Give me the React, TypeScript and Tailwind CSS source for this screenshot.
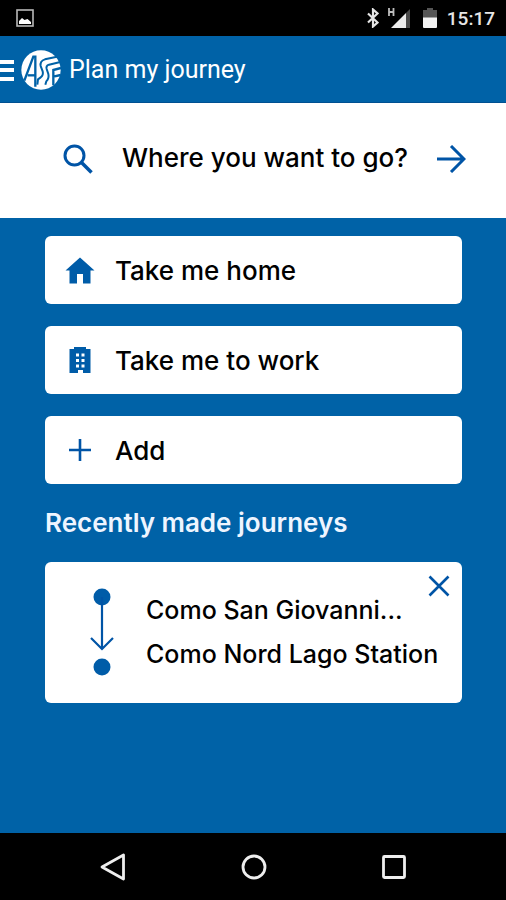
import { useState } from 'react';
import type { ReactNode } from 'react';

function StatusBar() {
    return (
        <div className="flex h-9 items-center justify-between bg-black pl-4 pr-[11px]">
            <svg className="h-[18px] w-[18px]" viewBox="0 0 18 18" aria-hidden="true">
                <rect x="1" y="1" width="16" height="16" fill="none" stroke="#b8b8b8" strokeWidth="1.6" />
                <path d="M3 15v-3l3-3 2.500 2 3-1 3.500 3v2z" fill="#fff" />
            </svg>
            <div className="flex items-center">
                <svg className="h-5 w-3" viewBox="0 0 12 20" fill="none" stroke="#e6e6e6" strokeWidth="2.200" aria-hidden="true">
                    <path d="M1 5.500l9.500 9L6 18.500v-17l4.500 4L1 14.500" />
                </svg>
                <svg className="ml-2 h-5 w-6" viewBox="0 0 24 20" aria-hidden="true">
                    <path d="M19 5L23 1v19h-4z" fill="#4a4a4a" />
                    <path d="M4 20L19 5v15z" fill="#ececec" />
                    <path d="M2 0v8M6.500 0v8M2 4h5" fill="none" stroke="#bdbdbd" strokeWidth="1.800" />
                </svg>
                <svg className="ml-3 h-5 w-[14px]" viewBox="0 0 14 20" aria-hidden="true">
                    <path d="M4 0h6v2h4v8H0V2h4z" fill="#555" />
                    <path d="M0 9.500h14V19a1 1 0 0 1-1 1H1a1 1 0 0 1-1-1z" fill="#f2f2f2" />
                </svg>
                <span className="ml-[10px] pt-0.5 font-['Roboto',sans-serif] text-[19px] font-medium leading-6 text-[#e6e6e6]">15:17</span>
            </div>
        </div>
    );
}

function Logo() {
    return (
        <svg className="h-10 w-10" viewBox="0 0 120 120" aria-hidden="true">
            <circle cx="60" cy="60" r="59" fill="#fff" />
            <g fill="none" stroke="#0062a7">
                <path d="M10 92L37 20h6v90" strokeWidth="7" />
                <path d="M20 76h22" strokeWidth="7" />
                <path d="M108 20L72 28Q56 33 59 48l6 16q3 12-6 18l-8 6-2 16" strokeWidth="6" />
                <path d="M118 36L84 44q-10 3-7 13l5 15q3 13-6 22l-3 10" strokeWidth="6" />
                <path d="M120 54L97 60v46M119 75L97 80" strokeWidth="7" />
            </g>
        </svg>
    );
}

function Header() {
    return (
        <header className="flex h-[67px] items-center border-b border-[#005091] pt-0.5 text-white">
            <button type="button" aria-label="Open menu" className="h-10 w-[14px] shrink-0">
                <svg className="h-10 w-[14px]" viewBox="0 0 14 40" fill="currentColor" aria-hidden="true">
                    <path d="M0 10h14v4H0zM0 18h14v4H0zM0 27h14v4H0z" />
                </svg>
            </button>
            <span className="ml-[7px] shrink-0">
                <Logo />
            </span>
            <h1 className="ml-2 font-['Roboto',sans-serif] text-[25px] leading-8">Plan my journey</h1>
        </header>
    );
}

function SearchForm() {
    const [query, setQuery] = useState('');

    return (
        <form
            className="flex h-[115px] items-center bg-white pb-1 pl-[63px] pr-10"
            onSubmit={(e) => e.preventDefault()}
        >
            <svg className="h-[30px] w-[30px] shrink-0" viewBox="0 0 30 30" fill="none" stroke="#0054a6" strokeWidth="3" aria-hidden="true">
                <circle cx="11.500" cy="11.500" r="9.500" />
                <path d="M18.500 18.500L28.500 28.500" strokeWidth="3.600" />
            </svg>
            <input
                type="text"
                aria-label="Destination"
                placeholder="Where you want to go?"
                value={query}
                onChange={(e) => setQuery(e.target.value)}
                className="ml-[29px] h-12 min-w-0 flex-1 pb-0.5 text-[26px] font-medium text-black outline-none placeholder:text-black placeholder:opacity-100"
            />
            <button type="submit" aria-label="Search" className="shrink-0">
                <svg className="h-7 w-[29px]" viewBox="0 0 29 28" fill="none" stroke="#0054a6" strokeWidth="3" aria-hidden="true">
                    <path d="M0 14h27M14 1l13 13-13 13" />
                </svg>
            </button>
        </form>
    );
}

const shortcuts: { label: string; icon: ReactNode }[] = [
    {
        label: 'Take me home',
        icon: (
            <svg className="h-[30px] w-[30px]" viewBox="0 0 30 30" fill="#005ca8" aria-hidden="true">
                <path d="M15 2.500L29.500 15.500h-4v13H18V19h-6v9.500H4.500v-13h-4z" />
            </svg>
        ),
    },
    {
        label: 'Take me to work',
        icon: (
            <svg className="h-[30px] w-[30px]" viewBox="0 0 30 30" fill="#005ca8" fillRule="evenodd" aria-hidden="true">
                <path d="M9 2h12v2h4.500v24H18v-3h-5v3H4.500V4H9zM11 8.500v3h3v-3zM16.500 8.500v3h3v-3zM11 14v3h3v-3zM16.500 14v3h3v-3zM11 19.500v3h3v-3zM16.500 19.500v3h3v-3z" />
            </svg>
        ),
    },
    {
        label: 'Add',
        icon: (
            <svg className="h-[30px] w-[30px]" viewBox="0 0 30 30" fill="none" stroke="#0054a6" strokeWidth="2.600" aria-hidden="true">
                <path d="M4 15h22M15 4v22" />
            </svg>
        ),
    },
];

function JourneyCard({ from, to, onRemove }: { from: string; to: string; onRemove: () => void }) {
    return (
        <li className="relative flex h-[141px] items-center rounded-md bg-white pb-0.5 pl-[45px]">
            <svg className="h-[90px] w-6 shrink-0" viewBox="0 0 24 90" aria-hidden="true">
                <g fill="#005ca8">
                    <circle cx="12" cy="10" r="8.500" />
                    <circle cx="12" cy="80" r="8.500" />
                </g>
                <path d="M12 10v52M1 51l11 11 11-11" fill="none" stroke="#0054a6" strokeWidth="2.200" />
            </svg>
            <div className="ml-8 whitespace-nowrap text-[25px] font-medium leading-[44px] text-black">
                <p>{from}</p>
                <p>{to}</p>
            </div>
            <button type="button" aria-label="Remove journey" onClick={onRemove} className="absolute right-3 top-[13px]">
                <svg className="h-[22px] w-[22px]" viewBox="0 0 22 22" fill="none" stroke="#0054a6" strokeWidth="2.600" aria-hidden="true">
                    <path d="M1.500 1.500l19 19M20.500 1.500l-19 19" />
                </svg>
            </button>
        </li>
    );
}

function NavBar() {
    return (
        <nav className="flex h-[67px] items-center justify-center gap-28 bg-black pl-0.5">
            <button type="button" aria-label="Back">
                <svg className="h-7 w-7" viewBox="0 0 28 28" fill="none" stroke="#eee" strokeWidth="2.800" strokeLinejoin="round" aria-hidden="true">
                    <path d="M23.500 2v24L2 14z" />
                </svg>
            </button>
            <button type="button" aria-label="Home">
                <svg className="h-7 w-7" viewBox="0 0 28 28" fill="none" stroke="#eee" strokeWidth="2.800" aria-hidden="true">
                    <circle cx="14" cy="14" r="11" />
                </svg>
            </button>
            <button type="button" aria-label="Recent apps">
                <svg className="h-7 w-7" viewBox="0 0 28 28" fill="none" stroke="#eee" strokeWidth="2.800" strokeLinejoin="round" aria-hidden="true">
                    <rect x="3.500" y="3.500" width="21" height="21" rx="1" />
                </svg>
            </button>
        </nav>
    );
}

export default function App() {
    const [journeys, setJourneys] = useState([
        { id: 1, from: 'Como San Giovanni...', to: 'Como Nord Lago Station' },
    ]);

    const removeJourney = (id: number) => setJourneys(journeys.filter((j) => j.id !== id));

    return (
        <div className="flex min-h-screen flex-col bg-[#0062a7] font-['Inter',sans-serif]">
            <StatusBar />
            <Header />
            <SearchForm />

            <main className="flex-1 pl-[45px] pr-11 pt-[18px]">
                <div className="flex flex-col gap-[22px]">
                    {shortcuts.map(({ label, icon }) => (
                        <button
                            key={label}
                            type="button"
                            className="flex h-[68px] items-center gap-5 rounded-md bg-white pl-5 text-left text-[26px] font-medium text-black"
                        >
                            {icon}
                            {label}
                        </button>
                    ))}
                </div>

                <h2 className="py-[22px] text-[26px] font-semibold leading-[34px] text-[#eef5ff]">Recently made journeys</h2>
                <ul className="flex flex-col gap-[22px]">
                    {journeys.map((j) => (
                        <JourneyCard key={j.id} from={j.from} to={j.to} onRemove={() => removeJourney(j.id)} />
                    ))}
                </ul>
            </main>

            <NavBar />
        </div>
    );
}
